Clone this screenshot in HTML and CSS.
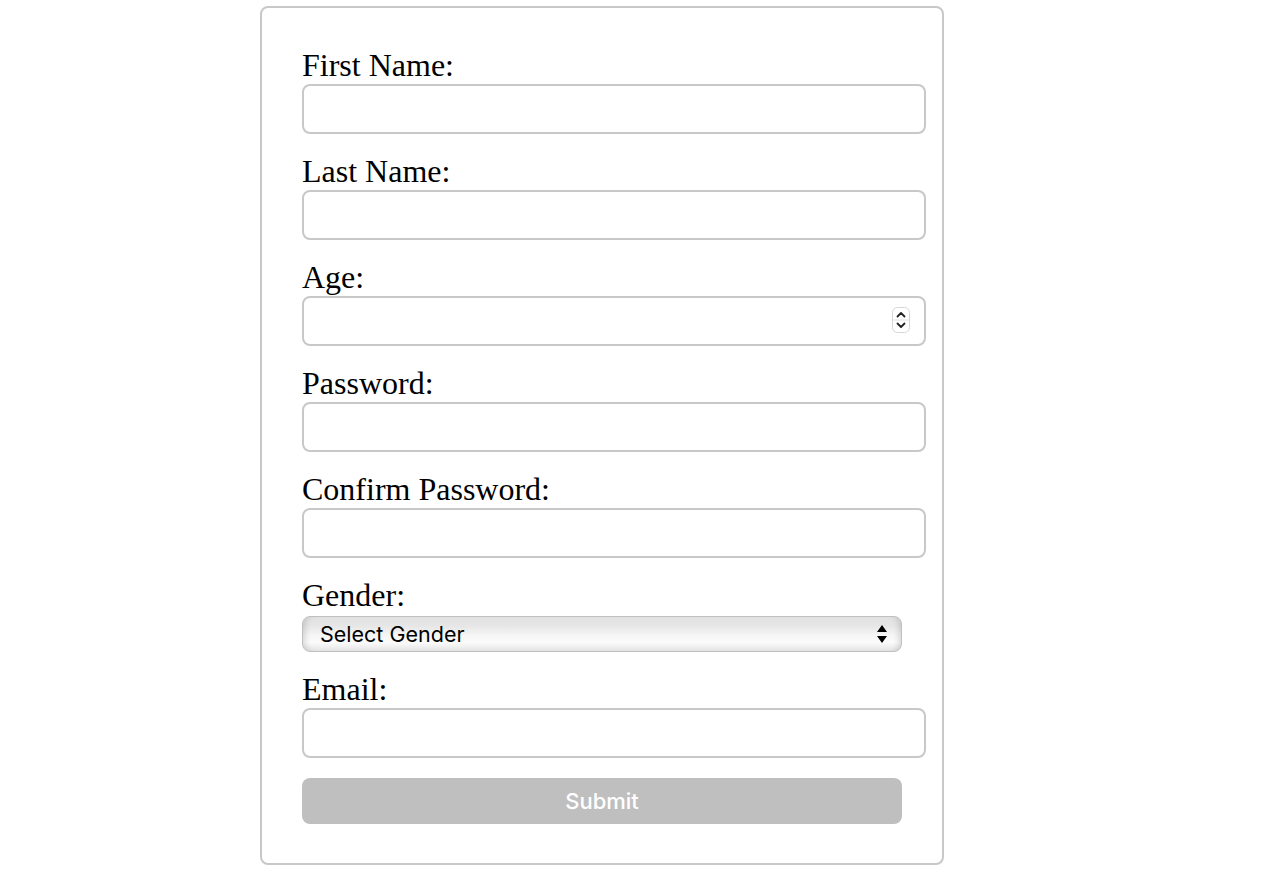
FILE: index.html
```html
<!DOCTYPE html>
<html lang="en">
<head>
    <meta charset="UTF-8">
    <meta name="viewport" content="width=device-width, initial-scale=1.0">
    <title>Registration Form</title>
    <link rel="stylesheet" href="styles.css">
</head>
<body>
    <form class="form-box" onsubmit="return false;">
        <label for="firstName">First Name:</label>
        <input type="text" id="firstName" />

        <label for="lastName">Last Name:</label>
        <input type="text" id="lastName" />

        <label for="age">Age:</label>
        <div class="number-wrap">
            <input type="number" id="age" />
            <span class="spinner">
                <svg width="18" height="26" viewBox="0 0 18 26">
                    <rect x="0.5" y="0.5" width="17" height="25" rx="5" fill="#fff" stroke="#d6d6d6"/>
                    <line x1="1" y1="13" x2="17" y2="13" stroke="#e2e2e2"/>
                    <path d="M5.5 9.5 L9 6 L12.5 9.5" fill="none" stroke="#222" stroke-width="1.8" stroke-linecap="round" stroke-linejoin="round"/>
                    <path d="M5.5 16.5 L9 20 L12.5 16.5" fill="none" stroke="#222" stroke-width="1.8" stroke-linecap="round" stroke-linejoin="round"/>
                </svg>
            </span>
        </div>

        <label for="password">Password:</label>
        <input type="password" id="password" />

        <label for="confirm">Confirm Password:</label>
        <input type="password" id="confirm" />

        <label for="gender">Gender:</label>
        <select id="gender">
            <option value="">Select Gender</option>
            <option value="male">Male</option>
            <option value="female">Female</option>
        </select>

        <label for="email">Email:</label>
        <input type="email" id="email" />

        <button type="submit" disabled>Submit</button>
    </form>
</body>
</html>
```

FILE: styles.css
```css
body {
    margin: 0;
    font-family: "Liberation Serif", "Times New Roman", serif;
    background-color: #fff;
}
.form-box {
    width: 600px;
    margin: 6px 0 0 260px;
    padding: 39px 40px 39px 40px;
    border: 2px solid #c8c8c8;
    border-radius: 8px;
}
label {
    display: block;
    font-size: 32px;
    line-height: 37px;
    color: #000;
}
input {
    display: block;
    width: 600px;
    height: 46px;
    padding: 0 10px;
    margin: 0 0 19px 0;
    border: 2px solid #c8c8c8;
    border-radius: 8px;
    font-size: 18px;
    box-sizing: content-box;
    outline: none;
}
.number-wrap {
    position: relative;
}
input[type=number] {
    -moz-appearance: textfield;
}
input[type=number]::-webkit-inner-spin-button,
input[type=number]::-webkit-outer-spin-button {
    -webkit-appearance: none;
    margin: 0;
}
.spinner {
    position: absolute;
    top: 11px;
    left: 590px;
    width: 18px;
    height: 26px;
}
.spinner svg {
    display: block;
}
select {
    display: block;
    -webkit-appearance: none;
    appearance: none;
    width: 600px;
    height: 36px;
    margin: 2px 0 19px 0;
    padding: 0 0 0 17px;
    border: 1px solid #c0c0c0;
    border-radius: 8px;
    font-family: "Inter", "Liberation Sans", sans-serif;
    font-size: 21.5px;
    color: #000;
    background-color: #eee;
    background-image:
        url("data:image/svg+xml;utf8,<svg xmlns='http://www.w3.org/2000/svg' width='10' height='20' viewBox='0 0 10 20'><path d='M0 8 L5 1 L10 8 Z M0 12 L5 19 L10 12 Z' fill='black'/></svg>"),
        linear-gradient(#e2e2e2, #e6e6e6 25%, #f6f6f6 55%, #fbfbfb 75%, #e4e4e4);
    background-repeat: no-repeat, no-repeat;
    background-position: right 14px center, 0 0;
    background-size: 10px 20px, 100% 100%;
    box-shadow: inset 7px 0 6px -5px rgba(0, 0, 0, 0.15), inset -7px 0 6px -5px rgba(0, 0, 0, 0.15);
}
button {
    display: block;
    width: 600px;
    height: 46px;
    margin: 20px 0 0 0;
    padding: 0;
    border: none;
    border-radius: 8px;
    background-color: #bfbfbf;
    color: #fff;
    font-family: "Inter", "Liberation Sans", sans-serif;
    font-size: 22px;
    font-weight: 500;
}
```
